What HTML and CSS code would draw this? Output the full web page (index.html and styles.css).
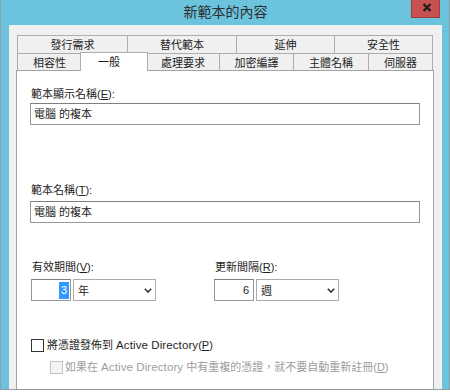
FILE: index.html
```html
<!DOCTYPE html>
<html lang="zh-Hant">
<head>
<meta charset="utf-8">
<title>新範本的內容</title>
<link rel="stylesheet" href="styles.css">
</head>
<body>
<div class="window">
  <div class="titlebar">
    <div class="title">新範本的內容</div>
    <div class="close">
      <svg class="close-x" width="10" height="9" viewBox="0 0 10 9"><path d="M1.5 1 L8.5 8 M8.5 1 L1.5 8" stroke="#1c1c1c" stroke-width="2.2" fill="none"/></svg>
    </div>
  </div>
  <div class="client">
    <div class="tabs">
      <div class="tabrow back">
        <div class="tab w111">發行需求</div>
        <div class="tab w110">替代範本</div>
        <div class="tab w99">延伸</div>
        <div class="tab w99">安全性</div>
      </div>
      <div class="tabrow front">
        <div class="tab w65">相容性</div>
        <div class="tab active">一般</div>
        <div class="tab w74">處理要求</div>
        <div class="tab w75">加密編譯</div>
        <div class="tab w76">主體名稱</div>
        <div class="tab w65">伺服器</div>
      </div>
    </div>
    <div class="panel">
      <div class="label first">範本顯示名稱(<u>E</u>):</div>
      <div class="textbox">電腦 的複本</div>

      <div class="label second">範本名稱(<u>T</u>):</div>
      <div class="textbox tb2">電腦 的複本</div>

      <div class="periods">
        <div class="group">
          <div class="label">有效期間(<u>V</u>):</div>
          <div class="controls">
            <div class="num"><span class="sel">3</span></div>
            <div class="combo"><span>年</span><svg class="chev" width="8" height="5" viewBox="0 0 8 5"><path d="M0.8 0.8 L4 4 L7.2 0.8" stroke="#333" stroke-width="1.6" fill="none"/></svg></div>
          </div>
        </div>
        <div class="group">
          <div class="label">更新間隔(<u>R</u>):</div>
          <div class="controls">
            <div class="num"><span class="val">6</span></div>
            <div class="combo"><span>週</span><svg class="chev" width="8" height="5" viewBox="0 0 8 5"><path d="M0.8 0.8 L4 4 L7.2 0.8" stroke="#333" stroke-width="1.6" fill="none"/></svg></div>
          </div>
        </div>
      </div>

      <div class="check c1"><span class="box"></span><span>將憑證發佈到 <span class="latin">Active Directory</span>(<u>P</u>)</span></div>
      <div class="check c2 disabled"><span class="box"></span><span>如果在 <span class="latin">Active Directory</span> 中有重複的憑證，就不要自動重新註冊(<u>D</u>)</span></div>
    </div>
  </div>
</div>
</body>
</html>
```
FILE: styles.css
```css
html, body {
  margin: 0;
  padding: 0;
  background: #ffffff;
}

body {
  font-family: "Liberation Sans", "Noto Sans CJK TC", sans-serif;
  font-size: 11px;
  color: #1e1e1e;
}

.window {
  width: 450px;
  height: 390px;
  box-sizing: border-box;
  border: 1px solid #8e9ca3;
  border-top: none;
  background: #6bc3de;
  padding: 0 7px 0 8px;
  display: flex;
  flex-direction: column;
}

.titlebar {
  height: 25px;
  display: grid;
  grid-template-columns: 1fr auto 1fr;
  align-items: start;
}

.title {
  grid-column: 2;
  font-family: "Noto Sans CJK TC", sans-serif;
  font-size: 14px;
  line-height: 23px;
  color: #2e2e2e;
}

.close {
  grid-column: 3;
  justify-self: end;
  margin-right: 2px;
  width: 29px;
  height: 18px;
  box-sizing: border-box;
  background: #c75050;
  border: 1px solid #a03e3e;
  border-top: none;
  display: flex;
  align-items: center;
  justify-content: center;
}

.close-x {
  margin-left: 3px;
  margin-top: -3px;
}

.client {
  flex: 1;
  min-height: 0;
  background: #f0f0f0;
  padding: 10px 8px 0 7px;
  display: flex;
  flex-direction: column;
}

.tabs {
  margin-left: 1px;
  width: 416px;
}

.tabrow {
  display: flex;
}

.tab {
  box-sizing: border-box;
  margin-left: -1px;
  border: 1px solid #adadad;
  border-bottom: none;
  background: #f0f0f0;
  text-align: center;
  font-family: "Noto Sans CJK TC", sans-serif;
  color: #1e1e1e;
  white-space: nowrap;
}

.tab:first-child {
  margin-left: 0;
}

.back .tab {
  height: 18px;
  line-height: 17px;
}

.front {
  height: 17px;
  align-items: flex-end;
}

.front .tab {
  height: 17px;
  line-height: 16px;
}

.front .tab.active {
  width: 68px;
  height: 19px;
  margin: 0 -1px -1px -2px;
  padding-right: 10px;
  background: #ffffff;
  z-index: 1;
}

.w65 { width: 65px; }
.w74 { width: 74px; }
.w75 { width: 75px; }
.w76 { width: 76px; }
.w99 { width: 99px; }
.w110 { width: 110px; }
.w111 { width: 111px; }

.panel {
  flex: 1;
  width: 418px;
  box-sizing: border-box;
  background: #ffffff;
  border: 1px solid #a3a3a3;
  border-bottom: none;
  padding-left: 13px;
}

.label {
  line-height: 14px;
  height: 14px;
  padding-left: 1px;
  white-space: nowrap;
}

.label.first {
  margin-top: 16px;
}

.label.second {
  margin-top: 58px;
}

.textbox {
  width: 390px;
  height: 22px;
  box-sizing: border-box;
  margin-top: 2px;
  border: 1px solid #979797;
  border-top-color: #7f7f7f;
  padding-left: 3px;
  line-height: 20px;
  white-space: nowrap;
}

.textbox.tb2 {
  margin-top: 4px;
}

.periods {
  display: flex;
  margin-top: 37px;
  margin-left: 1px;
}

.group {
  width: 183px;
}

.controls {
  display: flex;
  margin-top: 5px;
}

.num {
  width: 40px;
  height: 22px;
  box-sizing: border-box;
  border: 1px solid #979797;
  border-top-color: #7f7f7f;
  display: flex;
  align-items: center;
  justify-content: flex-end;
  padding-right: 1px;
}

.num .sel {
  background: #3399ff;
  color: #ffffff;
  height: 17px;
  line-height: 17px;
  padding: 0 2px;
}

.num .val {
  padding-right: 3px;
  line-height: 20px;
}

.combo {
  width: 83px;
  height: 22px;
  box-sizing: border-box;
  margin-left: 2px;
  border: 1px solid #acacac;
  background: #ffffff;
  display: flex;
  align-items: center;
  justify-content: space-between;
  padding: 0 3px 0 4px;
}

.chev {
  margin-top: 1px;
}

.check {
  display: flex;
  align-items: center;
  height: 14px;
  line-height: 14px;
  white-space: nowrap;
}

.check .latin {
  font-size: 11.5px;
  letter-spacing: 0.1px;
}

.check .box {
  width: 13px;
  height: 13px;
  box-sizing: border-box;
  border: 1px solid #333333;
  background: #ffffff;
  margin-right: 3px;
  flex: none;
}

.check.c1 {
  margin-top: 37px;
  margin-left: 1px;
}

.check.c2 {
  margin-top: 8px;
  margin-left: 20px;
}

.check.c2 .box {
  margin-right: 2px;
}

.check.disabled {
  color: #9d9d9d;
}

.check.disabled .box {
  border-color: #c4c4c4;
  background: #f4f4f4;
}
```
